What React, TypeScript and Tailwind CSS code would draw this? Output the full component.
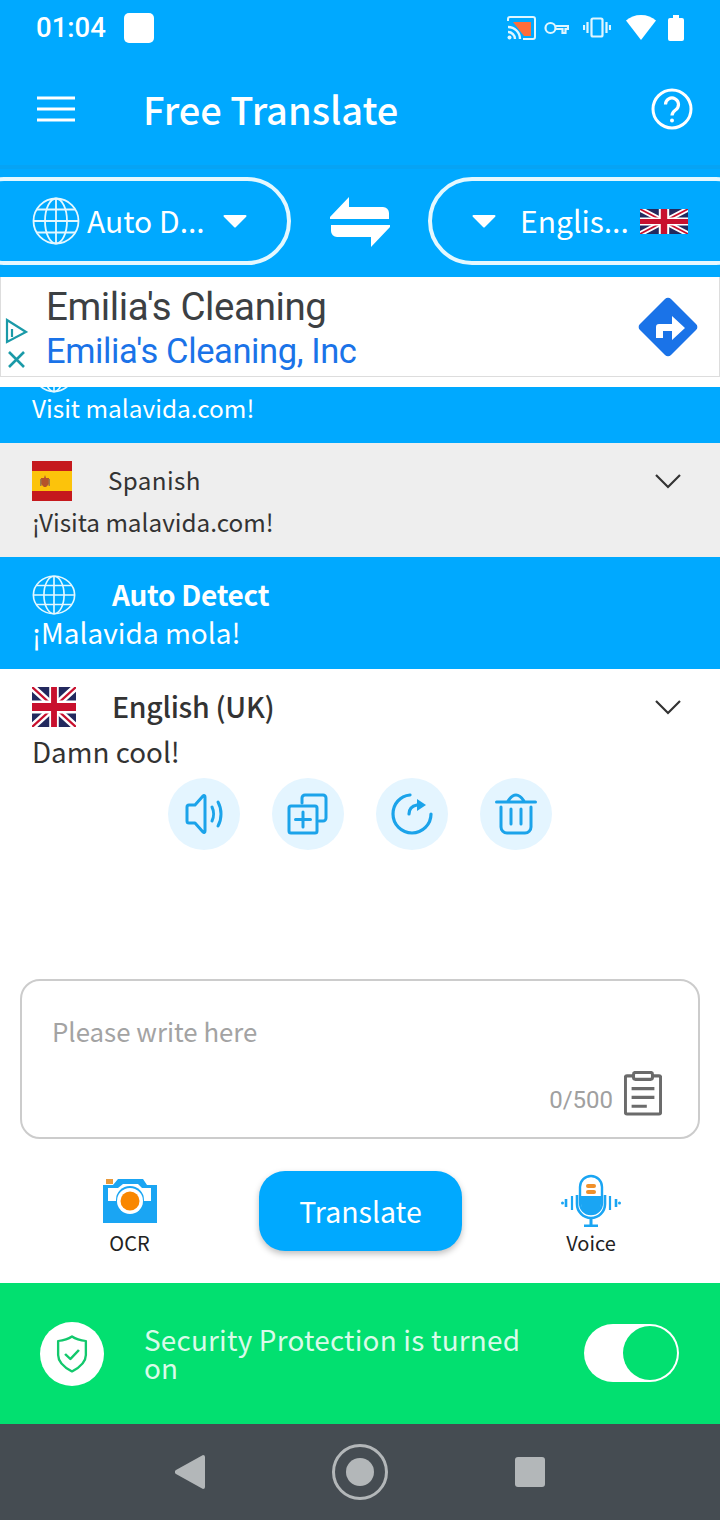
import React from 'react';

const cjk = { fontFamily: '"Noto Sans CJK SC", "Noto Sans", sans-serif' };

function Globe({ className }: { className?: string }) {
  return (
    <svg className={className} viewBox="0 0 48 48" preserveAspectRatio="none" fill="none" stroke="currentColor" strokeWidth="1.8">
      <circle cx="24" cy="24" r="22.5" />
      <ellipse cx="24" cy="24" rx="11" ry="22.5" />
      <path d="M24 1.500v45M1.500 24h45M5 12.500h38M5 35.500h38" />
    </svg>
  );
}

function UkFlag({ className }: { className?: string }) {
  return (
    <svg className={className} viewBox="0 0 60 40" preserveAspectRatio="none">
      <rect width="60" height="40" fill="#23295e" />
      <path d="M0 0l60 40M60 0L0 40" stroke="#fff" strokeWidth="8" />
      <path d="M0 0l60 40M60 0L0 40" stroke="#c8102e" strokeWidth="2.600" />
      <path d="M30 0v40M0 20h60" stroke="#fff" strokeWidth="13" />
      <path d="M30 0v40M0 20h60" stroke="#c8102e" strokeWidth="8" />
    </svg>
  );
}

function SpainFlag({ className }: { className?: string }) {
  return (
    <svg className={className} viewBox="0 0 40 40">
      <rect width="40" height="40" fill="#c5191d" />
      <rect y="10" width="40" height="20" fill="#fcc30b" />
      <path d="M9 17h3l1-3 1 3h3v6l-3 3h-2l-3-3z" fill="#b5532a" />
      <rect x="8" y="18" width="1.500" height="7" fill="#9a7b4a" />
      <rect x="16.500" y="18" width="1.500" height="7" fill="#9a7b4a" />
    </svg>
  );
}

function Caret({ className }: { className?: string }) {
  return (
    <svg className={className} viewBox="0 0 24 14" fill="#fff">
      <path d="M1.500 1h21a1 1 0 0 1 .7 1.700L13 13a1.400 1.400 0 0 1-2 0L.8 2.700A1 1 0 0 1 1.500 1z" />
    </svg>
  );
}

function Chevron() {
  return (
    <svg className="w-[26px] h-[16px]" viewBox="0 0 26 16" fill="none" stroke="#333" strokeWidth="2.200">
      <path d="M1 2l12 12L25 2" />
    </svg>
  );
}

function StatusBar() {
  return (
    <div className="h-[55px] flex items-center pl-[36px] pr-[36px] text-white">
      <span className="text-[27.500px] font-medium leading-none" style={{ fontFamily: 'Roboto, sans-serif' }}>01:04</span>
      <div className="ml-[18px] w-[30px] h-[30px] bg-white rounded-[5px]" />
      <div className="ml-auto flex items-center">
        <svg className="w-[29px] h-[24px]" viewBox="0 0 29 24" fill="none">
          <path d="M6 6h18v14h-7z" fill="#ff6d3a" />
          <path d="M1 5V3a2 2 0 0 1 2-2h23a2 2 0 0 1 2 2v18a2 2 0 0 1-2 2H16" stroke="#dff6ff" strokeWidth="2" />
          <path d="M1 11a12 12 0 0 1 12 12M1 16a7 7 0 0 1 7 7" stroke="#dff6ff" strokeWidth="2.400" />
          <circle cx="2.500" cy="21.500" r="2" fill="#dff6ff" />
        </svg>
        <svg className="ml-[8px] w-[25px] h-[14px]" viewBox="0 0 25 14" fill="none" stroke="#dff6ff" strokeWidth="2.200">
          <circle cx="6.500" cy="7" r="5" />
          <path d="M11.500 5H24v3h-2.500v4h-3V8H11.500" />
        </svg>
        <svg className="ml-[14px] w-[28px] h-[21px]" viewBox="0 0 28 21" fill="none" stroke="#dff6ff" strokeWidth="2.200">
          <rect x="8.500" y="1.500" width="11" height="18" rx="1.500" />
          <path d="M4.500 5v11M1 8v5M23.500 5v11M27 8v5" />
        </svg>
        <svg className="ml-[15px] w-[30px] h-[25px]" viewBox="0 0 30 25" fill="#fff">
          <path d="M15 0c6 0 11 2 15 5.500L15 25 0 5.500C4 2 9 0 15 0z" />
        </svg>
        <svg className="ml-[12px] w-[16px] h-[26px]" viewBox="0 0 16 26" fill="#fff">
          <path d="M5 0h6v3h3a2 2 0 0 1 2 2v19a2 2 0 0 1-2 2H2a2 2 0 0 1-2-2V5a2 2 0 0 1 2-2h3z" />
        </svg>
      </div>
    </div>
  );
}

function Header() {
  return (
    <div className="h-[110px] flex items-center pl-[37px] pr-[27px] pb-[2px] text-white">
      <svg className="w-[38px] h-[26px]" viewBox="0 0 38 26" fill="none" stroke="#fff" strokeWidth="3.200">
        <path d="M0 2h38M0 13h38M0 24h38" />
      </svg>
      <span className="ml-[68px] text-[38px] font-medium leading-none" style={cjk}>Free Translate</span>
      <svg className="ml-auto w-[42px] h-[42px]" viewBox="0 0 42 42" fill="none" stroke="#fff" strokeWidth="3">
        <circle cx="21" cy="21" r="19" />
        <path d="M14.500 16.500a6.500 6.500 0 1 1 10 5.500c-2 1.400-3.500 2.500-3.500 5.500" strokeWidth="3.200" />
        <circle cx="21" cy="32.500" r="2" fill="#fff" stroke="none" />
      </svg>
    </div>
  );
}

function LangSelect() {
  return (
    <div className="h-[112px] flex items-start justify-between pt-[8px] border-t-[4px] border-[#06a3f4] text-white overflow-hidden" style={cjk}>
      <div className="-ml-[40px] w-[331px] h-[88px] pl-[68px] pr-[40px] flex items-center rounded-full border-[4px] border-[#e4f8ff]">
        <Globe className="w-[48px] h-[48px] shrink-0 text-[#e4f8ff]" />
        <span className="ml-[7px] -mt-[3px] text-[30px] leading-none">Auto D...</span>
        <Caret className="ml-auto w-[24px] h-[14px]" />
      </div>
      <svg className="mt-[20px] w-[60px] h-[50px]" viewBox="0 0 60 50" fill="#fff">
        <path d="M19 0v10h34a6 6 0 0 1 6 6v6H0v-2z" />
        <path d="M41 50V40H7a6 6 0 0 1-6-6v-6h59v2z" />
      </svg>
      <div className="-mr-[40px] w-[332px] h-[88px] pl-[40px] pr-[68px] flex items-center rounded-full border-[4px] border-[#e4f8ff]">
        <Caret className="w-[24px] h-[14px]" />
        <span className="ml-[24px] -mt-[3px] text-[30px] leading-none">Englis...</span>
        <UkFlag className="ml-auto w-[48px] h-[25px] shrink-0" />
      </div>
    </div>
  );
}

function Ad() {
  return (
    <div className="h-[110px] bg-white border-b-[10px] border-[#ffffff] flex relative">
      <div className="flex-1 h-[100px] border border-[#dddddd] border-t-0 flex items-center pl-[45px] pr-[21px]">
        <div className="flex flex-col pt-[5px]">
          <span className="text-[38.500px] leading-[44px] text-[#3c4043] tracking-[-0.4px]" style={{ fontFamily: 'Roboto, sans-serif' }}>Emilia's Cleaning</span>
          <span className="text-[34.500px] leading-[45px] text-[#1a73e8] tracking-[-0.4px]" style={{ fontFamily: 'Roboto, sans-serif' }}>Emilia's Cleaning, Inc</span>
        </div>
        <svg className="ml-auto w-[60px] h-[60px]" viewBox="0 0 60 60">
          <path d="M27 2a4 4 0 0 1 6 0l25 25a4 4 0 0 1 0 6L33 58a4 4 0 0 1-6 0L2 33a4 4 0 0 1 0-6z" fill="#1a73e8" />
          <path d="M18 41V30a3 3 0 0 1 3-3h13v-8l13 12-13 12v-9H25v7z" fill="#fff" />
        </svg>
      </div>
      <svg className="absolute left-[5px] top-[41px] w-[24px] h-[54px]" viewBox="0 0 24 54" fill="none" stroke="#1a9aa8" strokeWidth="2.200">
        <path d="M2 2l19 12L2 24z" />
        <path d="M7 11v8" />
        <path d="M4 34l15 15M19 34L4 49" strokeWidth="2.600" />
      </svg>
    </div>
  );
}

function Actions() {
  return (
    <div className="mt-[7px] flex justify-center gap-[32px]">
      <button className="w-[72px] h-[72px] rounded-full bg-[#e4f5ff] flex items-center justify-center">
        <svg className="w-[42px] h-[42px]" viewBox="0 0 42 42" fill="none" stroke="#1ba3ea" strokeWidth="3" strokeLinejoin="round" strokeLinecap="round">
          <path d="M4 14a2 2 0 0 1 2-2h6l8-9c1-1 2-.5 2 1v34c0 1.500-1 2-2 1l-8-9H6a2 2 0 0 1-2-2z" />
          <path d="M29 14c2 4 2 10 0 14M35 9c4 7 4 17 0 24" />
        </svg>
      </button>
      <button className="w-[72px] h-[72px] rounded-full bg-[#e4f5ff] flex items-center justify-center">
        <svg className="w-[42px] h-[42px]" viewBox="0 0 42 42" fill="none" stroke="#1ba3ea" strokeWidth="3" strokeLinejoin="round" strokeLinecap="round">
          <path d="M15 10V5a3 3 0 0 1 3-3h18a3 3 0 0 1 3 3v20a3 3 0 0 1-3 3h-4" />
          <rect x="2" y="13" width="28" height="27" rx="2" />
          <path d="M16 19v15M8.500 26.500h15" />
        </svg>
      </button>
      <button className="w-[72px] h-[72px] rounded-full bg-[#e4f5ff] flex items-center justify-center">
        <svg className="w-[42px] h-[42px]" viewBox="0 0 42 42" fill="none" stroke="#1ba3ea" strokeWidth="3.200" strokeLinecap="round">
          <path d="M19 2C9 3 2 11 2 21a19 19 0 0 0 38 0" />
          <path d="M18 21c0-5 3-8 8-9" />
          <path d="M26 6l9 6-9 6z" fill="#1ba3ea" stroke="none" />
        </svg>
      </button>
      <button className="w-[72px] h-[72px] rounded-full bg-[#e4f5ff] flex items-center justify-center">
        <svg className="w-[42px] h-[42px]" viewBox="0 0 42 42" fill="none" stroke="#1ba3ea" strokeWidth="3" strokeLinecap="round" strokeLinejoin="round">
          <path d="M1.500 9h39M13 8c2-3 4-6 8-6s6 3 8 6" />
          <path d="M6 14v20a6 6 0 0 0 6 6h18a6 6 0 0 0 6-6V14" />
          <path d="M16 16v15M26 16v15" />
        </svg>
      </button>
    </div>
  );
}

function ResultList() {
  return (
    <div style={cjk}>
      <div className="h-[56px] bg-[#00a9ff] text-white overflow-hidden pl-[32px] relative">
        <Globe className="absolute left-[32px] -top-[40px] w-[44px] h-[46px] text-[#e4f8ff]" />
        <p className="pt-[4px] text-[24.400px] leading-[34px]">Visit malavida.com!</p>
      </div>
      <div className="h-[114px] bg-[#eeeeee] pl-[32px] pr-[39px] pt-[18px] text-[#333333]">
        <div className="h-[40px] flex items-center">
          <SpainFlag className="w-[40px] h-[40px]" />
          <span className="ml-[36px] -mt-[1px] text-[24.200px] tracking-[0.4px]">Spanish</span>
          <span className="ml-auto"><Chevron /></span>
        </div>
        <p className="mt-[4px] text-[24.300px] leading-[34px]">¡Visita malavida.com!</p>
      </div>
      <div className="h-[112px] bg-[#00a9ff] pl-[32px] pt-[18px] text-white">
        <div className="h-[40px] flex items-center">
          <Globe className="w-[44px] h-[40px] text-[#e4f8ff]" />
          <span className="ml-[36px] -mt-[2px] text-[28px] font-bold tracking-[-0.3px]">Auto Detect</span>
        </div>
        <p className="-mt-[1px] text-[28px] leading-[36px]">¡Malavida mola!</p>
      </div>
      <div className="bg-white pl-[32px] pr-[39px] pt-[18px] text-[#333333]">
        <div className="h-[40px] flex items-center">
          <UkFlag className="w-[44px] h-[40px]" />
          <span className="ml-[36px] -mt-[2px] text-[28.500px] font-medium tracking-[-0.3px]">English (UK)</span>
          <span className="ml-auto"><Chevron /></span>
        </div>
        <p className="mt-[4px] text-[27.800px] leading-[40px]">Damn cool!</p>
      </div>
      <Actions />
    </div>
  );
}

function InputBox() {
  return (
    <div className="mx-[20px] h-[160px] rounded-[20px] border-2 border-[#cccccc] pl-[30px] pr-[36px] flex flex-col" style={cjk}>
      <p className="pt-[32px] text-[25.800px] leading-[36px] text-[#a3a3a3]">Please write here</p>
      <div className="mt-auto pb-[21px] flex items-end justify-end">
        <span className="mb-[1px] text-[24px] leading-[30px] text-[#a0a0a0]" style={{ fontFamily: 'Roboto, sans-serif' }}>0/500</span>
        <svg className="ml-[11px] w-[38px] h-[45px]" viewBox="0 0 40 46" preserveAspectRatio="none" fill="none" stroke="#6b6b6b" strokeWidth="3.200">
          <path d="M10 5H3a1.500 1.500 0 0 0-1.500 1.500v36A1.500 1.500 0 0 0 3 44h34a1.500 1.500 0 0 0 1.500-1.500v-36A1.500 1.500 0 0 0 37 5h-7" />
          <rect x="10" y="1.500" width="20" height="7" rx="2" />
          <path d="M8 18h24M8 27h24M8 36h16" />
        </svg>
      </div>
    </div>
  );
}

function Toolbar() {
  return (
    <div className="h-[144px] flex items-start pt-[32px]" style={cjk}>
      <div className="w-[259px] flex flex-col items-center">
        <svg className="mt-[7px] w-[54px] h-[46px]" viewBox="0 0 54 46">
          <path d="M0 7h10l5-6h25l4 6h10v38H0z" fill="#1aa5f3" />
          <path d="M3 1h7v5H3z" fill="#e89a3c" />
          <path d="M5 10h10l5-4h15l4 4h9v13H5z" fill="#fff" />
          <circle cx="27" cy="22" r="14" fill="#1aa5f3" />
          <circle cx="27" cy="23" r="13" fill="#fff" />
          <circle cx="27" cy="23" r="9.500" fill="#f98700" />
        </svg>
        <span className="mt-[5px] text-[20px] leading-[28px] text-[#222222]">OCR</span>
      </div>
      <button className="w-[203px] h-[80px] rounded-[26px] bg-[#00a9ff] text-white text-[28.500px] shadow-[0_3px_6px_rgba(0,0,0,0.25)]">Translate</button>
      <div className="flex-1 flex flex-col items-center">
        <svg className="mt-[3px] w-[60px] h-[53px]" viewBox="0 0 60 53" fill="none" stroke="#1aa5f3">
          <rect x="19" y="2" width="22" height="38" rx="11" strokeWidth="2.400" fill="#fff" />
          <path d="M20 22h20v8a10 10 0 0 1-20 0z" fill="#1aa5f3" stroke="none" />
          <rect x="25" y="10" width="10" height="4" rx="2" fill="#f0902a" stroke="none" />
          <rect x="25" y="16" width="10" height="4" rx="2" fill="#f0902a" stroke="none" />
          <path d="M16 21v9a14 14 0 0 0 28 0v-9" strokeWidth="2.600" />
          <path d="M30 44v7M23 52h14" strokeWidth="3" />
          <path d="M11 22v14M49 22v14" strokeWidth="2.200" />
          <path d="M5 25v8M55 25v8" strokeWidth="2.600" />
          <circle cx="1.500" cy="29" r="1.500" fill="#1aa5f3" stroke="none" />
          <circle cx="58.500" cy="29" r="1.500" fill="#1aa5f3" stroke="none" />
        </svg>
        <span className="mt-[2px] text-[20px] leading-[28px] text-[#222222]">Voice</span>
      </div>
    </div>
  );
}

function SecurityBar() {
  return (
    <div className="h-[141px] bg-[#02e070] flex items-center pl-[40px] pr-[41px]" style={cjk}>
      <div className="w-[64px] h-[64px] rounded-full bg-white flex items-center justify-center shrink-0">
        <svg className="w-[32px] h-[38px]" viewBox="0 0 30 38" preserveAspectRatio="none" fill="none" stroke="#12c86c" strokeWidth="2.200" strokeLinejoin="round">
          <path d="M15 1.500c4 3 8 4 13 4.500v14c0 7-5 12-13 16.500C7 32 2 27 2 20V6c5-.5 9-1.500 13-4.500z" />
          <path d="M8.500 19l5 5 8-9" strokeWidth="2.400" />
        </svg>
      </div>
      <p className="ml-[40px] -mt-[2px] w-[390px] text-[27.900px] leading-[28px] text-[#d9fbe9] tracking-[0.2px]">Security Protection is turned on</p>
      <div className="ml-auto -mt-[2px] w-[95px] h-[58px] rounded-full bg-white relative shrink-0">
        <div className="absolute right-[2px] top-[2px] w-[54px] h-[54px] rounded-full bg-[#02e070]" />
      </div>
    </div>
  );
}

function NavBar() {
  return (
    <div className="h-[96px] bg-[#454c52] flex items-center justify-center">
      <svg className="w-[30px] h-[34px]" viewBox="0 0 30 34" fill="#b3b7b9">
        <path d="M28 0a2 2 0 0 1 2 2v30a2 2 0 0 1-2 2L1 19a2.400 2.400 0 0 1 0-4z" />
      </svg>
      <div className="ml-[127px] w-[56px] h-[56px] rounded-full border-[3px] border-[#b3b7b9] flex items-center justify-center">
        <div className="w-[28px] h-[28px] rounded-full bg-[#b3b7b9]" />
      </div>
      <div className="ml-[127px] w-[30px] h-[30px] rounded-[3px] bg-[#b3b7b9]" />
    </div>
  );
}

export default function App() {
  return (
    <div className="w-[720px] h-[1520px] flex flex-col bg-white overflow-hidden">
      <div className="bg-[#00a9ff]">
        <StatusBar />
        <Header />
        <LangSelect />
      </div>
      <Ad />
      <ResultList />
      <div className="flex-1 flex flex-col justify-end">
        <InputBox />
        <Toolbar />
      </div>
      <SecurityBar />
      <NavBar />
    </div>
  );
}
